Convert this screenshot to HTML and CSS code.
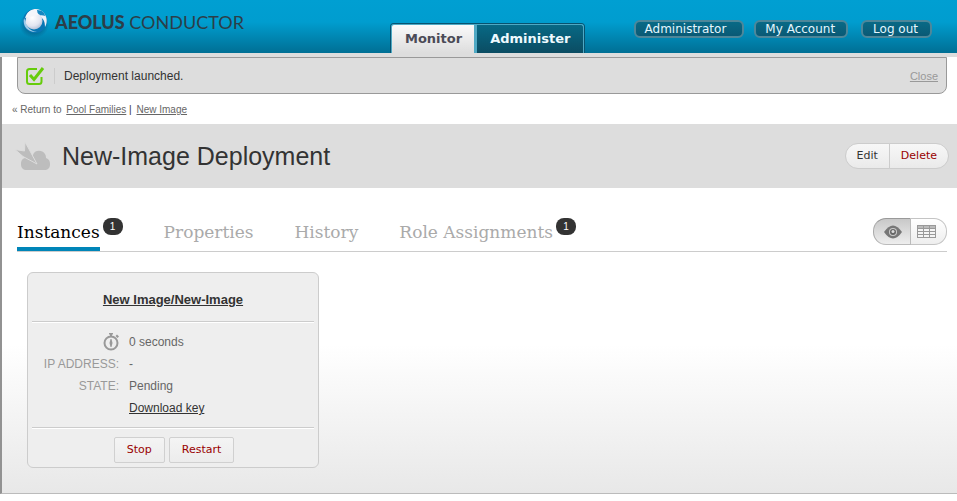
FILE: index.html
```html
<!DOCTYPE html>
<html lang="en">
<head>
<meta charset="utf-8">
<title>Aeolus Conductor</title>
<link rel="stylesheet" href="styles.css">
</head>
<body>
<header class="masthead">
  <a class="brand" href="#">
    <svg class="brand-mark" viewBox="0 0 32 34" aria-hidden="true">
      <defs>
        <radialGradient id="ball" cx=".4" cy=".3" r=".75"><stop offset="0" stop-color="#fff"/><stop offset=".65" stop-color="#e2e5f0"/><stop offset="1" stop-color="#aebbd2"/></radialGradient>
        <radialGradient id="shade"><stop offset=".6" stop-color="#06618c" stop-opacity=".7"/><stop offset="1" stop-color="#06618c" stop-opacity="0"/></radialGradient>
      </defs>
      <ellipse cx="14" cy="20" rx="15" ry="13" fill="url(#shade)"/>
      <circle cx="15" cy="16" r="12" fill="#0876b4"/>
      <path d="M7 10C10 3 19 2 24 8c4 5 3 11 1 14 0-6-2-9-5-10z" fill="#eef1f8"/>
      <path d="M4 13c-2 9 5 15 13 14-7-1-10-5-11-10z" fill="#9dcbe8"/>
      <path d="M17 5c5 0 8 3 8 6-2-1-5-1-8 0z" fill="#1588c2"/>
      <circle cx="14" cy="16" r="8.500" fill="url(#ball)"/>
      <path d="M5 13C7 6 12 4 17 5l1 5z" fill="#f4f6fb"/>
    </svg>
    <span class="brand-name"><b>AEOLUS</b> CONDUCTOR</span>
  </a>
  <nav class="sections">
    <a class="section current" href="#">Monitor</a>
    <a class="section" href="#">Administer</a>
  </nav>
  <nav class="account">
    <a class="pill pill-user" href="#">Administrator</a>
    <a class="pill pill-account" href="#">My Account</a>
    <a class="pill pill-logout" href="#">Log out</a>
  </nav>
</header>
<main class="page">
  <div class="flash" role="status">
    <svg class="flash-icon" viewBox="0 0 20 20" aria-hidden="true"><path d="M12 3H4.500Q2 3 2 5.500V15.500Q2 18 4.500 18H14Q16.500 18 16.500 15.500V11" fill="none" stroke="#66cc0c" stroke-width="2"/><path d="M5 9l4 4.500L18 2" fill="none" stroke="#66cc0c" stroke-width="3"/></svg>
    <p class="flash-text">Deployment launched.</p>
    <a class="flash-close" href="#">Close</a>
  </div>
  <nav class="crumbs">« Return to <a href="#">Pool Families</a> <b class="bar">|</b> <a href="#">New Image</a></nav>
  <div class="title-band">
    <svg class="title-icon" viewBox="0 0 36 30" aria-hidden="true"><path d="M6 23c0-4 2-6 5-6h7V14c1-5 9-6 12-1 1 2 1 3 1 4 3 1 4 3 4 6 0 4-2 6-6 6H12c-4 0-6-2-6-6z" fill="#bdbdbd"/><path d="M0 8.500L9.500 10 10 1l5 9L22 23 8 15.500z" fill="#bdbdbd" stroke="#ddd"/></svg>
    <h1>New-Image Deployment</h1>
    <div class="title-actions">
      <button class="action" type="button">Edit</button><button class="action danger" type="button">Delete</button>
    </div>
  </div>
  <div class="tab-bar">
    <nav class="tabs">
      <a class="tab active" href="#"><span class="tab-label">Instances</span><span class="count">1</span></a>
      <a class="tab" href="#"><span class="tab-label">Properties</span></a>
      <a class="tab" href="#"><span class="tab-label">History</span></a>
      <a class="tab" href="#"><span class="tab-label">Role Assignments</span><span class="count">1</span></a>
    </nav>
    <div class="views">
      <button class="view pressed" type="button" aria-label="Pretty view"><svg width="20" height="14" viewBox="0 0 20 14"><path d="M1 7Q10-6 19 7 10 20 1 7z" fill="#777"/><circle cx="10" cy="7" r="4" fill="#ccc"/><circle cx="10" cy="7" r="3" fill="#666"/><circle cx="10" cy="6.500" r="1.500" fill="#ddd"/></svg></button><button class="view" type="button" aria-label="Table view"><svg width="19" height="13" viewBox="0 0 19 13"><path d="M0 0h19v13H0z" fill="#999"/><path d="M1 1h5v2H1zm6 0h5v2H7zm6 0h5v2h-5z" fill="#bbb"/><path d="M1 4h5v2H1zm6 0h5v2H7zm6 0h5v2h-5zM1 7h5v2H1zm6 0h5v2H7zm6 0h5v2h-5zM1 10h5v2H1zm6 0h5v2H7zm6 0h5v2h-5z" fill="#f5f5f5"/></svg></button>
    </div>
  </div>
  <article class="card">
    <h2><a href="#">New Image/New-Image</a></h2>
    <dl class="facts">
      <dt><svg class="clock" width="16" height="18" viewBox="0 0 16 18" role="img" aria-label="Uptime"><circle cx="8" cy="10" r="6.500" fill="none" stroke="#999" stroke-width="2"/><path d="M6 0h4v1.500H9V3H7V1.500H6zM12.500 3l1.500-1.500L16 3.500 14.500 5zM7.500 6h1l1 4-1 4h-1l-1-4z" fill="#999"/></svg></dt><dd>0 seconds</dd>
      <dt>IP ADDRESS:</dt><dd>-</dd>
      <dt>STATE:</dt><dd>Pending</dd>
      <dd class="key"><a href="#">Download key</a></dd>
    </dl>
    <div class="card-actions">
      <button type="button">Stop</button>
      <button type="button">Restart</button>
    </div>
  </article>
</main>
</body>
</html>
```
FILE: styles.css
```css
* { box-sizing: border-box; }
body {
  margin: 0;
  min-height: 100vh;
  display: flex;
  flex-direction: column;
  background: #fff;
  color: #333;
  font: 12px/16px "Liberation Sans", sans-serif;
}
a { color: inherit; }

/* Header */
.masthead {
  display: flex;
  height: 57px;
  padding: 0 25px 0 20px;
  border-bottom: 4px solid #ddd;
  background: linear-gradient(#009fd2 0, #009dcf 22px, #006f94 53px);
}
.brand {
  display: flex;
  align-items: flex-start;
  gap: 3px;
  width: 370px;
  padding-top: 5px;
  text-decoration: none;
}
.brand-mark { width: 32px; height: 34px; }
.brand-name { padding-top: 7px; color: #2c3e48; font: 400 18px/20px Lato, sans-serif; }
.brand-name b { font-weight: 900; }
.sections {
  display: flex;
  align-self: flex-end;
  height: 30px;
  border: 1px solid #075370;
  border-bottom: 0;
  border-radius: 4px 4px 0 0;
}
.section {
  padding: 0 13px;
  border: 1px solid #4fa9c4;
  border-width: 1px 1px 0 0;
  border-radius: 0 3px 0 0;
  background: linear-gradient(#086985, #0b4c62);
  color: #eefaff;
  font: bold 13px/27px "DejaVu Sans", sans-serif;
  text-decoration: none;
}
.section.current {
  padding-right: 12px;
  border-width: 1px 3px 0 1px;
  border-radius: 3px 0 0 0;
  background: linear-gradient(#fafafa, #ddd);
  color: #4b4b57;
}
.account { display: flex; margin-left: auto; padding-top: 20px; }
.pill {
  height: 18px;
  border: 2px solid #4d879a;
  border-radius: 6px;
  background: linear-gradient(#086a86, #0a5975);
  color: #e4f7ff;
  font: 12px/14px "DejaVu Sans", sans-serif;
  text-decoration: none;
}
.pill-user { padding: 0 16px 0 9px; }
.pill-account { margin-left: 10px; padding: 0 11px 0 9px; }
.pill-logout { margin-left: 13px; padding: 0 12px 0 10px; }

/* Page body */
.page {
  flex: 1;
  margin-bottom: 7px;
  border-left: 2px solid #929292;
  border-bottom: 1px solid #bbb;
  background: linear-gradient(#fff 66%, #e8e8e8);
}
.flash {
  display: flex;
  align-items: center;
  height: 37px;
  margin: 0 10px 0 15px;
  padding: 0 8px 0 7px;
  border: 1px solid #999;
  border-radius: 0 0 8px 8px;
  background: #ddd;
}
.flash-icon { width: 20px; height: 20px; }
.flash-text { margin: 0 0 0 9px; padding-left: 9px; border-left: 1px solid #ccc; }
.flash-close { margin-left: auto; color: #999; font-size: 11px; }
.crumbs { padding: 8px 10px 6px; color: #666; font-size: 10px; }
.crumbs a { margin-left: 2px; }
.bar { color: #333; font-weight: normal; }
.title-band {
  display: flex;
  align-items: center;
  height: 64px;
  padding: 0 8px 0 13px;
  background: #ddd;
}
.title-icon { width: 36px; height: 30px; }
h1 { margin: 0 0 0 11px; font-size: 25px; line-height: 30px; font-weight: normal; }
.title-actions { display: flex; margin-left: auto; }
.action {
  height: 26px;
  padding: 0 11px;
  border: 1px solid #ccc;
  border-radius: 13px 0 0 13px;
  background: linear-gradient(#f7f7f7, #eaeaea);
  color: #333;
  font: 11px/16px "DejaVu Sans", sans-serif;
}
.danger { margin-left: -1px; border-radius: 0 13px 13px 0; color: #900; }

/* Tabs */
.tab-bar {
  display: flex;
  justify-content: space-between;
  margin: 30px 10px 0 15px;
  border-bottom: 1px solid #ccc;
}
.tabs { display: flex; gap: 41px; }
.tab { display: flex; align-items: flex-start; gap: 3px; height: 33px; color: #aaa; text-decoration: none; }
.tab-label { height: 33px; font: 300 17px/28px "DejaVu Serif", serif; }
.active .tab-label { border-bottom: 4px solid #0085b8; color: #000; }
.count {
  width: 20px;
  border-radius: 8px;
  background: #333;
  color: #fff;
  font-size: 10px;
  line-height: 17px;
  text-align: center;
}
.views { display: flex; }
.view {
  display: flex;
  align-items: center;
  justify-content: center;
  width: 36px;
  height: 27px;
  padding: 0 4px 0 0;
  border: 1px solid #c4c4c4;
  border-left: 0;
  border-radius: 0 13px 13px 0;
  background: linear-gradient(#fff, #eee);
}
.view.pressed {
  width: 38px;
  padding: 0 0 0 2px;
  border: 1px solid #aaa;
  border-color: #999 #bbb #bbb #aaa;
  border-radius: 13px 0 0 13px;
  background: linear-gradient(#c8c8c8, #eee);
}

/* Instance card */
.card {
  width: 292px;
  margin: 20px 25px 25px;
  padding: 0 4px 4px;
  border: 1px solid #ccc;
  border-radius: 6px;
  background: #eee;
}
h2 {
  margin: 0;
  padding: 19px 0 13px;
  border-bottom: 1px solid #ccc;
  box-shadow: 0 1px #fff;
  font-size: 13px;
  line-height: 16px;
  text-align: center;
}
.facts {
  display: grid;
  grid-template-columns: 87px 1fr;
  grid-auto-rows: 22px;
  column-gap: 10px;
  margin: 0;
  padding: 9px 0 8px;
  line-height: 22px;
}
dt { color: #999; text-align: right; }
dd { margin: 0; color: #666; }
.key { grid-column: 2; color: #333; }
.clock { display: block; margin: 2px 0 0 auto; }
.card-actions {
  display: flex;
  justify-content: center;
  gap: 4px;
  padding: 9px 0 0 2px;
  border-top: 1px solid #ccc;
  box-shadow: inset 0 1px #fff;
}
.card-actions button {
  height: 26px;
  padding: 0 12px;
  border: 1px solid #d0d0d0;
  border-radius: 2px;
  background: linear-gradient(#f4f4f4, #ececec);
  color: #900;
  font: 11px/16px "DejaVu Sans", sans-serif;
}
```
